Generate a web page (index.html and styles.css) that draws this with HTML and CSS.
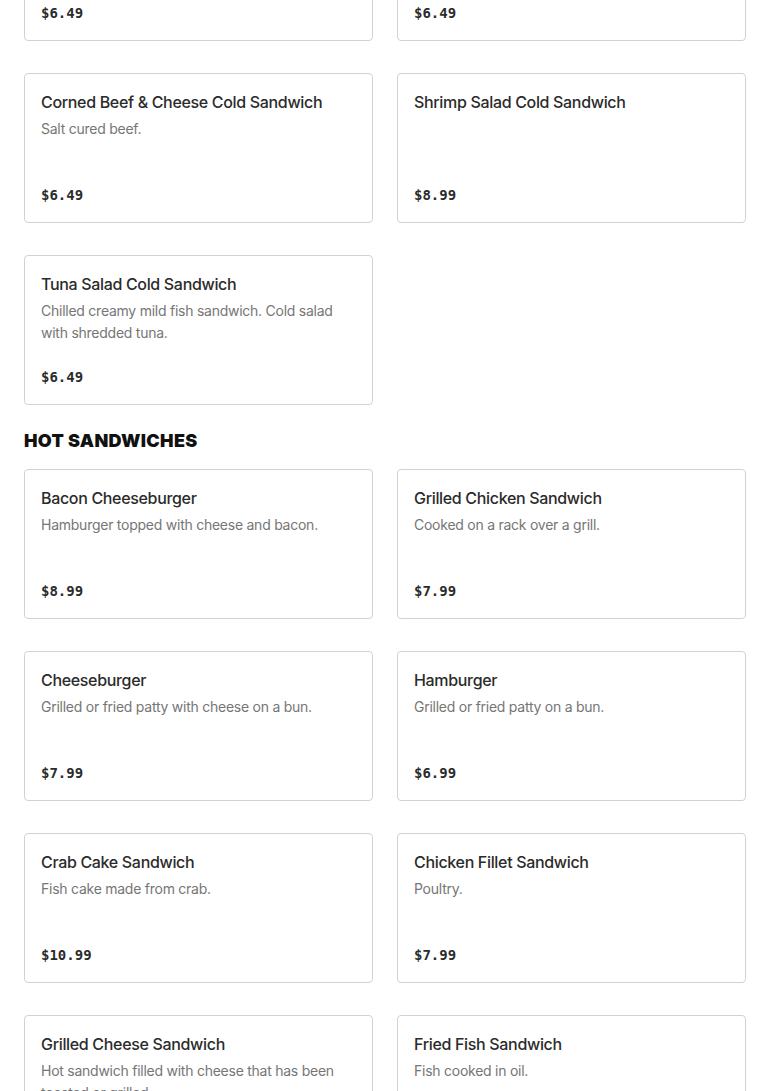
FILE: index.html
```html
<!DOCTYPE html>
<html>
<head>
<meta charset="utf-8">
<link rel="stylesheet" href="styles.css">
</head>
<body>
<main class="menu">
  <section class="section">
    <div class="grid">
      <div class="card"><div class="title">Ham &amp; Cheese Cold Sandwich</div><div class="desc">Sliced ham with cheese.</div><div class="price">$6.49</div></div>
      <div class="card"><div class="title">Turkey Cold Sandwich</div><div class="desc">Sliced turkey breast.</div><div class="price">$6.49</div></div>
      <div class="card"><div class="title">Corned Beef &amp; Cheese Cold Sandwich</div><div class="desc">Salt cured beef.</div><div class="price">$6.49</div></div>
      <div class="card"><div class="title">Shrimp Salad Cold Sandwich</div><div class="desc"></div><div class="price">$8.99</div></div>
      <div class="card"><div class="title">Tuna Salad Cold Sandwich</div><div class="desc">Chilled creamy mild fish sandwich. Cold salad with shredded tuna.</div><div class="price">$6.49</div></div>
    </div>
  </section>
  <section class="section">
    <h2 class="heading">HOT SANDWICHES</h2>
    <div class="grid">
      <div class="card"><div class="title">Bacon Cheeseburger</div><div class="desc">Hamburger topped with cheese and bacon.</div><div class="price">$8.99</div></div>
      <div class="card"><div class="title">Grilled Chicken Sandwich</div><div class="desc">Cooked on a rack over a grill.</div><div class="price">$7.99</div></div>
      <div class="card"><div class="title">Cheeseburger</div><div class="desc">Grilled or fried patty with cheese on a bun.</div><div class="price">$7.99</div></div>
      <div class="card"><div class="title">Hamburger</div><div class="desc">Grilled or fried patty on a bun.</div><div class="price">$6.99</div></div>
      <div class="card"><div class="title">Crab Cake Sandwich</div><div class="desc">Fish cake made from crab.</div><div class="price">$10.99</div></div>
      <div class="card"><div class="title">Chicken Fillet Sandwich</div><div class="desc">Poultry.</div><div class="price">$7.99</div></div>
      <div class="card"><div class="title">Grilled Cheese Sandwich</div><div class="desc">Hot sandwich filled with cheese that has been toasted or grilled.</div><div class="price">$5.99</div></div>
      <div class="card"><div class="title">Fried Fish Sandwich</div><div class="desc">Fish cooked in oil.</div><div class="price">$8.99</div></div>
    </div>
  </section>
</main>
</body>
</html>
```
FILE: styles.css
```css
html, body {
  margin: 0;
  padding: 0;
  background: #ffffff;
}
body {
  font-family: "Inter", "Liberation Sans", sans-serif;
  color: #2b2b2b;
}
.menu {
  padding: 0 24px;
  margin-top: -109px;
}
.grid {
  display: grid;
  grid-template-columns: 1fr 1fr;
  column-gap: 24px;
  row-gap: 32px;
}
.card {
  border: 1px solid #d2d2d2;
  border-radius: 4px;
  padding: 16px;
  display: flex;
  flex-direction: column;
}
.title {
  font-size: 16px;
  line-height: 24px;
  font-weight: 500;
  color: #2b2b2b;
  letter-spacing: -0.33px;
}
.desc {
  margin-top: 4px;
  min-height: 44px;
  font-size: 14px;
  line-height: 22px;
  color: #767676;
  letter-spacing: -0.25px;
}
.price {
  margin-top: 22px;
  font-family: "DejaVu Sans Mono", "Liberation Mono", monospace;
  font-weight: bold;
  font-size: 14px;
  line-height: 22px;
  color: #2b2b2b;
}
.heading {
  margin: 24px 0 16px;
  font-family: "Inter", "Liberation Sans", sans-serif;
  font-weight: 900;
  font-size: 18px;
  line-height: 24px;
  color: #111;
  letter-spacing: 0.3px;
}
```
